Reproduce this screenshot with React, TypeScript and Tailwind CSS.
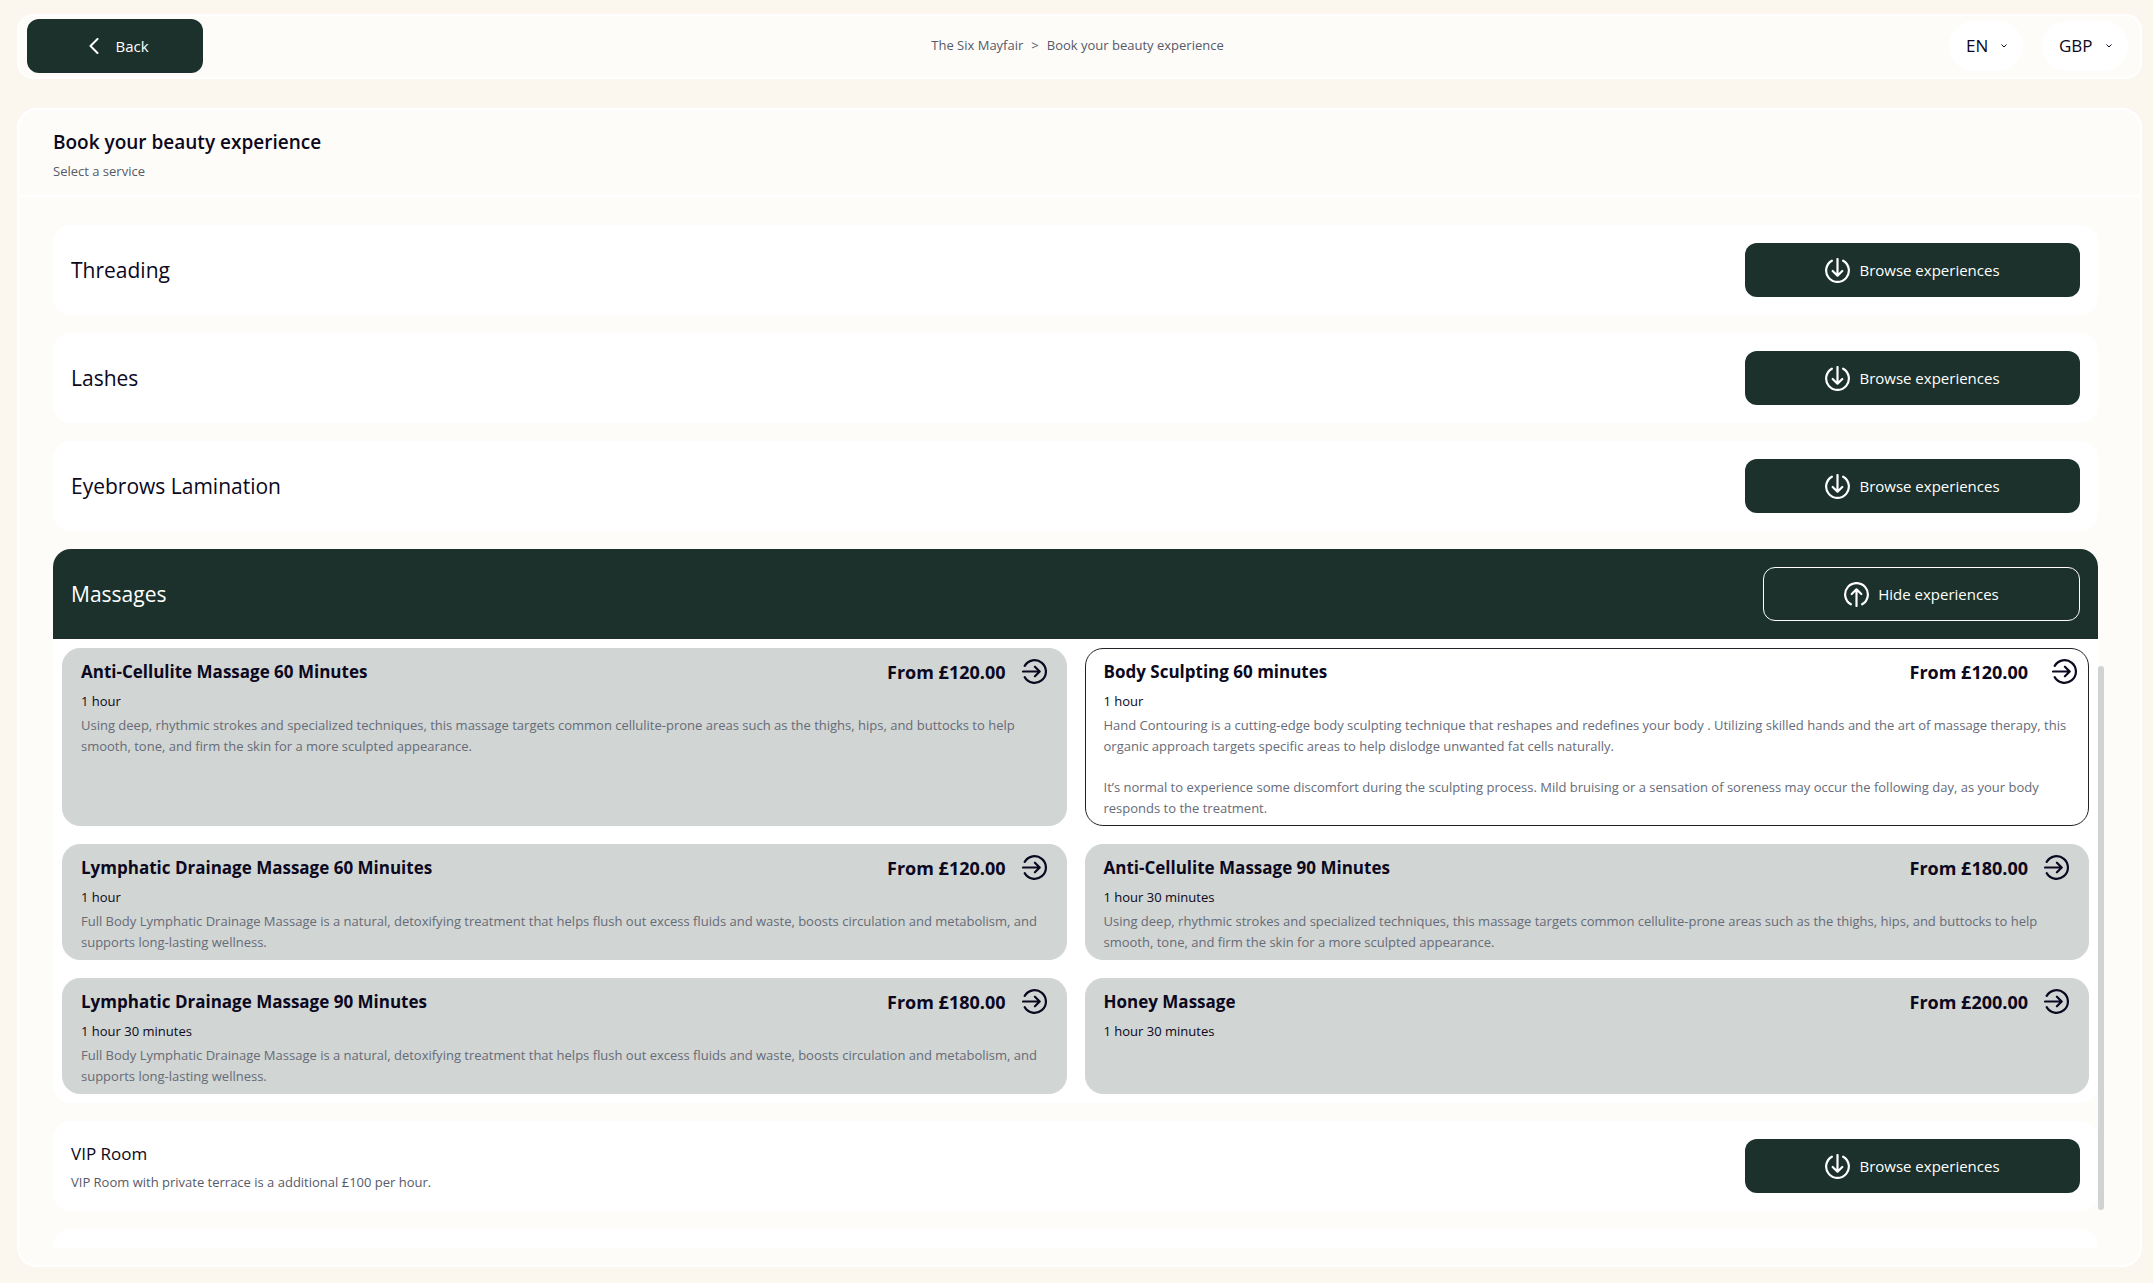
type Direction = "down" | "up" | "right"

type Experience = {
  title: string
  price: string
  duration: string
  description?: string[]
  active?: boolean
}

type Service = {
  name: string
  note?: string
  experiences?: Experience[]
}

const CELLULITE =
  "Using deep, rhythmic strokes and specialized techniques, this massage targets common cellulite-prone areas such as the thighs, hips, and buttocks to help smooth, tone, and firm the skin for a more sculpted appearance."

const LYMPHATIC =
  "Full Body Lymphatic Drainage Massage is a natural, detoxifying treatment that helps flush out excess fluids and waste, boosts circulation and metabolism, and supports long-lasting wellness."

const MASSAGES: Experience[] = [
  { title: "Anti-Cellulite Massage 60 Minutes", price: "£120.00", duration: "1 hour", description: [CELLULITE] },
  {
    title: "Body Sculpting 60 minutes",
    price: "£120.00",
    duration: "1 hour",
    description: [
      "Hand Contouring is a cutting-edge body sculpting technique that reshapes and redefines your body . Utilizing skilled hands and the art of massage therapy, this organic approach targets specific areas to help dislodge unwanted fat cells naturally.",
      "It’s normal to experience some discomfort during the sculpting process. Mild bruising or a sensation of soreness may occur the following day, as your body responds to the treatment.",
    ],
    active: true,
  },
  { title: "Lymphatic Drainage Massage 60 Minuites", price: "£120.00", duration: "1 hour", description: [LYMPHATIC] },
  { title: "Anti-Cellulite Massage 90 Minutes", price: "£180.00", duration: "1 hour 30 minutes", description: [CELLULITE] },
  { title: "Lymphatic Drainage Massage 90 Minutes", price: "£180.00", duration: "1 hour 30 minutes", description: [LYMPHATIC] },
  { title: "Honey Massage", price: "£200.00", duration: "1 hour 30 minutes" },
]

const SERVICES: Service[] = [
  { name: "Threading" },
  { name: "Lashes" },
  { name: "Eyebrows Lamination" },
  { name: "Massages", experiences: MASSAGES },
  { name: "VIP Room", note: "VIP Room with private terrace is a additional £100 per hour." },
]

const ROTATION: Record<Direction, string> = {
  down: "",
  up: "rotate-180",
  right: "-rotate-90",
}

function CircleArrow({ direction, className = "" }: { direction: Direction; className?: string }) {
  return (
    <svg
      viewBox="0 0 24 24"
      fill="none"
      stroke="currentColor"
      strokeWidth={2.1}
      strokeLinecap="round"
      strokeLinejoin="round"
      aria-hidden="true"
      className={`size-[25px] shrink-0 ${ROTATION[direction]} ${className}`}
    >
      <path d="M6.6 2.6a10.9 10.9 0 1 0 10.8 0" />
      <path d="M12 1v15.6M7.4 12.4l4.6 4.6 4.6-4.6" />
    </svg>
  )
}

function PillSelect({ label, value, width }: { label: string; value: string; width: string }) {
  return (
    <div className="relative flex items-center">
      <select
        aria-label={label}
        defaultValue={value}
        className={`h-[50px] appearance-none rounded-full bg-white pl-[17px] text-[17px] leading-7 text-[#0b0820] ${width}`}
      >
        <option>{value}</option>
      </select>
      <svg
        viewBox="0 0 6 4"
        fill="none"
        stroke="currentColor"
        aria-hidden="true"
        className="pointer-events-none absolute right-4 h-1 w-1.5"
      >
        <path d="M0.5 0.5 3 3 5.5 0.5" />
      </svg>
    </div>
  )
}

function TopBar() {
  return (
    <header className="grid grid-cols-[1fr_auto_1fr] items-center rounded-2xl border-2 border-white bg-[#fdfcf8] pt-[3px] pr-3 pb-1 pl-2">
      <button
        type="button"
        className="flex h-[54px] w-44 items-center justify-center gap-4 rounded-xl bg-[#1c312c] pl-2 text-[15px] font-medium text-white"
      >
        <svg
          viewBox="0 0 10 16"
          fill="none"
          stroke="currentColor"
          strokeWidth={2}
          strokeLinecap="round"
          strokeLinejoin="round"
          aria-hidden="true"
          className="h-4 w-2.5"
        >
          <path d="M8.5 1 1.5 8l7 7" />
        </svg>
        Back
      </button>
      <nav aria-label="Breadcrumb" className="flex gap-2 text-[13px] text-[#565a69]">
        <a href="#">The Six Mayfair</a>
        <span>&gt;</span>
        <span>Book your beauty experience</span>
      </nav>
      <div className="flex justify-end gap-[19px]">
        <PillSelect label="Language" value="EN" width="w-[74px]" />
        <PillSelect label="Currency" value="GBP" width="w-[86px]" />
      </div>
    </header>
  )
}

function ExperienceCard({ title, price, duration, description, active }: Experience) {
  return (
    <article
      className={`rounded-[18px] border px-[18px] pt-[9px] pb-1.5 ${
        active ? "border-[#1f2328] bg-white" : "border-[#d1d5d3] bg-[#d1d5d3]"
      }`}
    >
      <div className="flex h-[27px] items-center pr-px text-[17px] font-bold">
        <h3 className="flex-1">{title}</h3>
        <span className="text-lg">From {price}</span>
        <button type="button" aria-label={`Book ${title}`} className="ml-4">
          <CircleArrow direction="right" className={active ? "translate-x-2" : ""} />
        </button>
      </div>
      <p className="mt-1.5 text-[13px] leading-5">{duration}</p>
      {description && (
        <div className="mt-1 flex flex-col gap-5 text-[13px] leading-[21px] text-[#666b78]">
          {description.map((text) => (
            <p key={text}>{text}</p>
          ))}
        </div>
      )}
    </article>
  )
}

function ServiceSection({ name, note, experiences }: Service) {
  const open = Boolean(experiences)
  return (
    <section className="shrink-0 overflow-hidden rounded-[18px] bg-white">
      <div className={`flex h-[90px] items-center justify-between px-[18px] ${open ? "bg-[#1c312c] text-white" : ""}`}>
        <div>
          <h2 className={note ? "text-[17px] leading-7" : "text-[21px] leading-8"}>{name}</h2>
          {note && <p className="mt-1 text-[13px] leading-5 text-[#565a69]">{note}</p>}
        </div>
        <button
          type="button"
          aria-expanded={open}
          className={`flex h-[54px] items-center justify-center gap-[9px] rounded-xl text-[15px] font-medium text-white ${
            open ? "w-[317px] border border-white" : "w-[335px] bg-[#1c312c]"
          }`}
        >
          <CircleArrow direction={open ? "up" : "down"} />
          {open ? "Hide experiences" : "Browse experiences"}
        </button>
      </div>
      {experiences && (
        <div className="grid grid-cols-2 gap-[18px] p-[9px]">
          {experiences.map((experience) => (
            <ExperienceCard key={experience.title} {...experience} />
          ))}
        </div>
      )}
    </section>
  )
}

export default function App() {
  return (
    <div className="flex h-screen flex-col gap-[29px] bg-[#fbf7ef] pt-3.5 pr-[11px] pb-4 pl-[17px] font-['Open_Sans','Noto_Sans',sans-serif] text-[#0b0820]">
      <TopBar />
      <main className="flex min-h-0 flex-1 flex-col rounded-[20px] border-2 border-white bg-[#fdfcf8]">
        <div className="border-b-2 border-white px-[34px] pt-[18px] pb-3.5">
          <h1 className="text-[19px] leading-7 font-semibold">Book your beauty experience</h1>
          <p className="mt-[5px] text-[13px] leading-5 text-[#565a69]">Select a service</p>
        </div>
        <div className="relative mt-7 mr-9 mb-[17px] ml-[34px] flex min-h-0 flex-1 flex-col">
          <div className="flex min-h-0 flex-1 flex-col gap-[18px] overflow-y-auto pr-1.5 [scrollbar-width:none]">
            {SERVICES.map((service) => (
              <ServiceSection key={service.name} {...service} />
            ))}
            <section className="h-[90px] shrink-0 rounded-[18px] bg-white" />
          </div>
          {/* scroll thumb */}
          <div className="absolute right-0 bottom-[38px] h-[544px] w-1.5 rounded-full bg-[#d1d2d2]" />
        </div>
      </main>
    </div>
  )
}
